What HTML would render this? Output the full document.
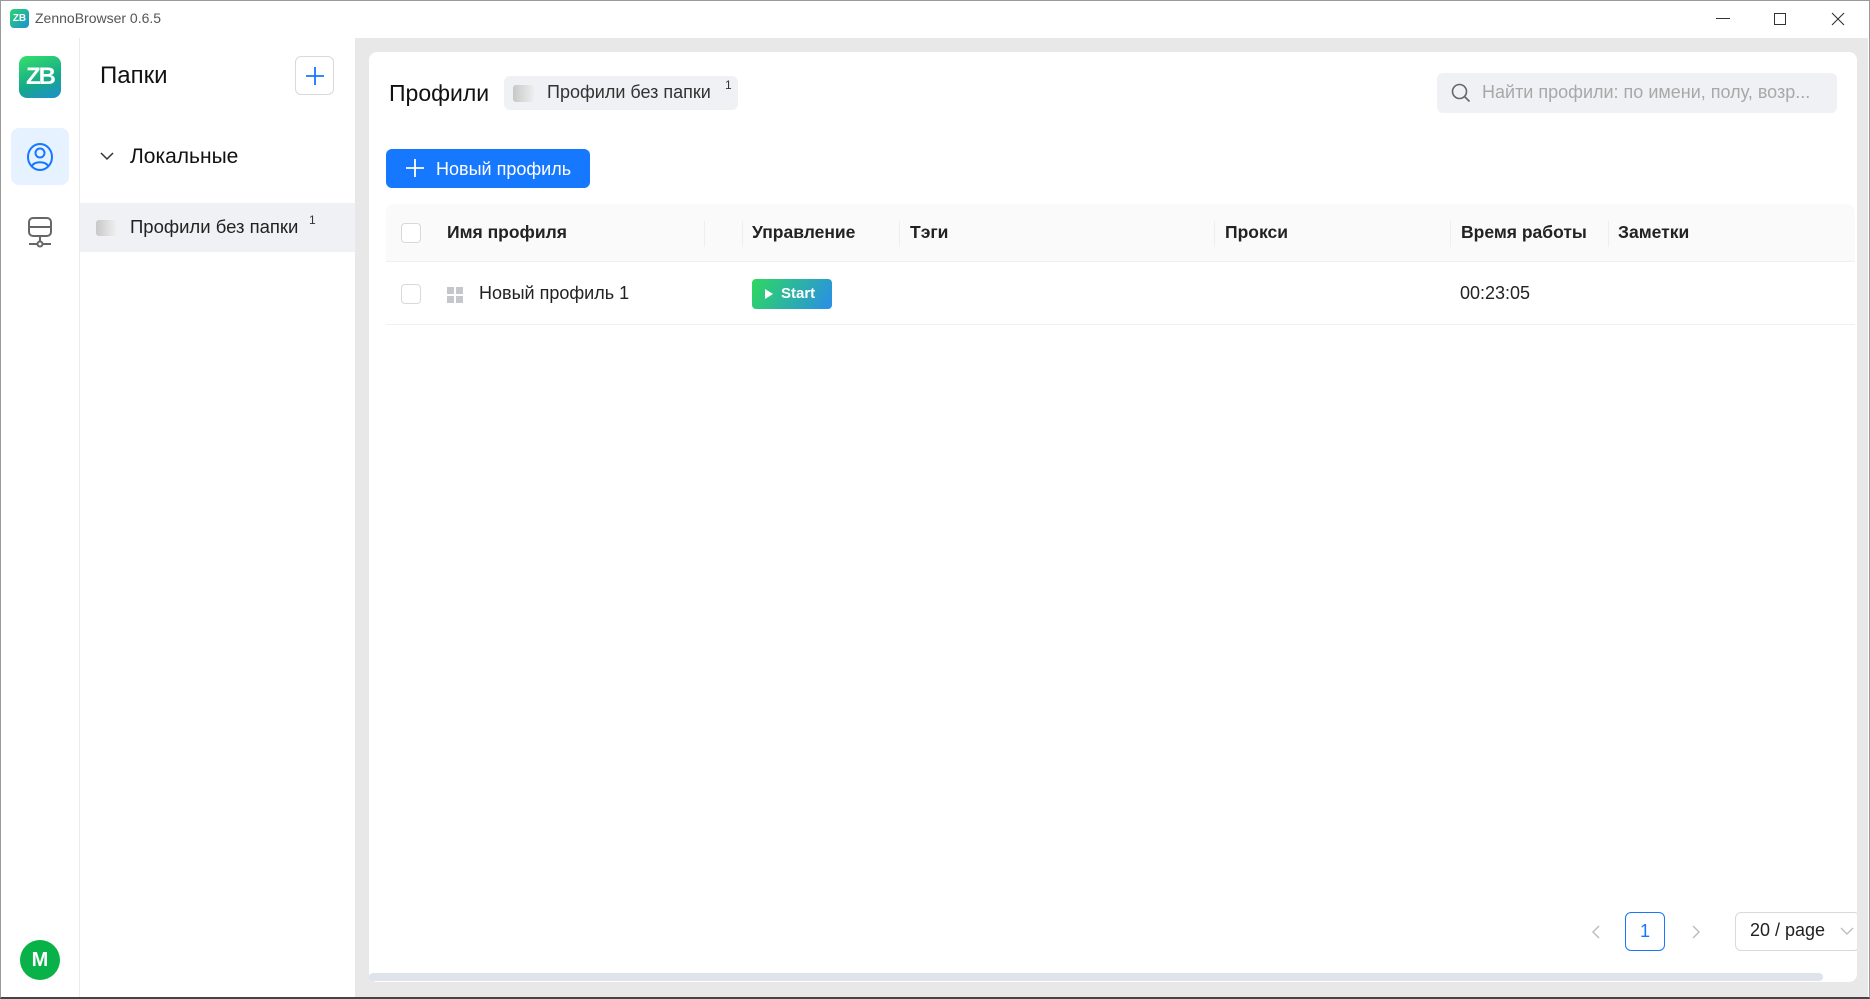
<!DOCTYPE html>
<html><head><meta charset="utf-8"><style>
*{box-sizing:border-box;margin:0;padding:0}
body{width:1870px;height:999px;overflow:hidden;background:#fff;font-family:"Liberation Sans","Noto Sans CJK SC",sans-serif;color:#1f1f1f;position:relative}
.a{position:absolute}
.win{left:0;top:0;width:1870px;height:999px;border:1px solid #9a9a9a;border-bottom:2px solid #444}
</style></head><body>
<div class="a win"></div>
<div class="a" style="left:10px;top:9px;width:19px;height:19px;border-radius:4px;background:linear-gradient(135deg,#2bd46a,#1a8fd8);color:#fff;font:bold 10px 'Liberation Sans';line-height:19px;text-align:center">ZB</div>
<div class="a" style="left:35px;top:10px;font-size:14px;color:#555">ZennoBrowser 0.6.5</div>
<div class="a" style="left:1716px;top:18px;width:14px;height:1px;background:#333"></div>
<div class="a" style="left:1774px;top:13px;width:12px;height:12px;border:1px solid #333"></div>
<svg class="a" style="left:1831px;top:12px" width="14" height="14"><path d="M1 1L13 13M13 1L1 13" stroke="#333" stroke-width="1.1"/></svg>
<div class="a" style="left:1px;top:38px;width:79px;height:959px;border-right:1px solid #ececec;background:#fff"></div>
<div class="a" style="left:19px;top:56px;width:42px;height:42px;border-radius:8px;background:linear-gradient(160deg,#35e06a,#15a88a 60%,#1f8fd0);color:#fff;font:bold 24px 'Liberation Sans';line-height:42px;text-align:center;letter-spacing:-2px">ZB</div>
<div class="a" style="left:11px;top:128px;width:58px;height:57px;border-radius:8px;background:#e6f2ff"></div>
<svg class="a" style="left:26px;top:142px" width="28" height="30" viewBox="0 0 28 30"><ellipse cx="14" cy="15" rx="12" ry="13" fill="none" stroke="#1677ff" stroke-width="2"/><circle cx="14" cy="11" r="4.5" fill="none" stroke="#1677ff" stroke-width="2"/><path d="M6 24c2-5 14-5 16 0" fill="none" stroke="#1677ff" stroke-width="2"/></svg>
<svg class="a" style="left:26px;top:216px" width="28" height="32" viewBox="0 0 28 32"><rect x="3" y="2" width="22" height="18" rx="4" fill="none" stroke="#666" stroke-width="2"/><path d="M3 11h22M14 20v8M3 28h22" stroke="#666" stroke-width="2"/><circle cx="14" cy="28" r="2.5" fill="#fff" stroke="#666" stroke-width="2"/></svg>
<div class="a" style="left:20px;top:940px;width:40px;height:40px;border-radius:50%;background:#09b248;color:#fff;font:bold 20px 'Liberation Sans';line-height:40px;text-align:center">M</div>
<div class="a" style="left:100px;top:62px;font-size:24px;color:#111">Папки</div>
<div class="a" style="left:295px;top:56px;width:39px;height:39px;border:1px solid #d9d9d9;border-radius:6px"></div>
<svg class="a" style="left:305px;top:66px" width="20" height="20"><path d="M10 1v18M1 10h18" stroke="#1677ff" stroke-width="1.8"/></svg>
<svg class="a" style="left:100px;top:151px" width="14" height="10"><path d="M1 2l6 6 6-6" fill="none" stroke="#333" stroke-width="1.5"/></svg>
<div class="a" style="left:130px;top:145px;font-size:21px;color:#111">Локальные</div>
<div class="a" style="left:80px;top:203px;width:275px;height:49px;background:#f0f1f4"></div>
<div class="a" style="left:96px;top:220px;width:20px;height:16px;border-radius:3px;background:linear-gradient(90deg,#c8c8c8,#eee)"></div>
<div class="a" style="left:130px;top:216px;font-size:18.5px;color:#222">Профили без папки</div>
<div class="a" style="left:309px;top:213px;font-size:12px;color:#333">1</div>
<div class="a" style="left:355px;top:38px;width:1513px;height:959px;background:#e8e8e8"></div>
<div class="a" style="left:369px;top:52px;width:1488px;height:930px;background:#fff;border-radius:8px"></div>
<div class="a" style="left:369px;top:973px;width:1454px;height:8px;background:#dfe3eb;border-radius:4px"></div>
<div class="a" style="left:389px;top:80px;font-size:23px;color:#111">Профили</div>
<div class="a" style="left:504px;top:76px;width:234px;height:34px;border-radius:6px;background:#f0f1f4"></div>
<div class="a" style="left:513px;top:85px;width:21px;height:17px;border-radius:3px;background:linear-gradient(90deg,#c8c8c8,#eee)"></div>
<div class="a" style="left:547px;top:82px;font-size:18px;color:#333">Профили без папки</div>
<div class="a" style="left:725px;top:78px;font-size:12px;color:#333">1</div>
<div class="a" style="left:1437px;top:73px;width:400px;height:40px;border-radius:6px;background:#f0f1f4"></div>
<svg class="a" style="left:1451px;top:83px" width="20" height="20"><circle cx="8.5" cy="8.5" r="7" fill="none" stroke="#666" stroke-width="1.6"/><path d="M13.5 13.5l5 5" stroke="#666" stroke-width="1.6"/></svg>
<div class="a" style="left:1482px;top:82px;font-size:18px;color:#a8a8a8">Найти профили: по имени, полу, возр...</div>
<div class="a" style="left:386px;top:149px;width:204px;height:39px;border-radius:6px;background:#1677ff"></div>
<svg class="a" style="left:405px;top:158px" width="20" height="20"><path d="M10 1v18M1 10h18" stroke="#fff" stroke-width="1.8"/></svg>
<div class="a" style="left:436px;top:159px;font-size:18px;color:#fff">Новый профиль</div>
<div class="a" style="left:386px;top:204px;width:1469px;height:58px;background:#fafafa;border-bottom:1px solid #f0f0f0;border-radius:8px 8px 0 0"></div>
<div class="a" style="left:401px;top:223px;width:20px;height:20px;border:1px solid #d9d9d9;border-radius:4px;background:#fff"></div>
<div class="a" style="left:447px;top:222px;font-size:17.5px;font-weight:bold;color:#222">Имя профиля</div>
<div class="a" style="left:704px;top:221px;width:1px;height:26px;background:#eee"></div>
<div class="a" style="left:742px;top:221px;width:1px;height:26px;background:#eee"></div>
<div class="a" style="left:752px;top:222px;font-size:17.5px;font-weight:bold;color:#222">Управление</div>
<div class="a" style="left:899px;top:221px;width:1px;height:26px;background:#eee"></div>
<div class="a" style="left:910px;top:222px;font-size:17.5px;font-weight:bold;color:#222">Тэги</div>
<div class="a" style="left:1214px;top:221px;width:1px;height:26px;background:#eee"></div>
<div class="a" style="left:1225px;top:222px;font-size:17.5px;font-weight:bold;color:#222">Прокси</div>
<div class="a" style="left:1450px;top:221px;width:1px;height:26px;background:#eee"></div>
<div class="a" style="left:1461px;top:222px;font-size:17.5px;font-weight:bold;color:#222">Время работы</div>
<div class="a" style="left:1608px;top:221px;width:1px;height:26px;background:#eee"></div>
<div class="a" style="left:1618px;top:222px;font-size:17.5px;font-weight:bold;color:#222">Заметки</div>
<div class="a" style="left:386px;top:324px;width:1469px;height:1px;background:#f0f0f0"></div>
<div class="a" style="left:401px;top:284px;width:20px;height:20px;border:1px solid #d9d9d9;border-radius:4px"></div>
<svg class="a" style="left:447px;top:287px" width="16" height="16"><rect x="0" y="0" width="7" height="7" fill="#c4c7cc"/><rect x="9" y="0" width="7" height="7" fill="#c4c7cc"/><rect x="0" y="9" width="7" height="7" fill="#c4c7cc"/><rect x="9" y="9" width="7" height="7" fill="#c4c7cc"/></svg>
<div class="a" style="left:479px;top:283px;font-size:18px;color:#222">Новый профиль 1</div>
<div class="a" style="left:752px;top:279px;width:80px;height:30px;border-radius:4px;background:linear-gradient(120deg,#2ed85e,#2a8ee8)"></div>
<svg class="a" style="left:764px;top:288px" width="10" height="12"><path d="M1 1l8 5-8 5z" fill="#fff"/></svg>
<div class="a" style="left:781px;top:285px;font-size:15px;font-weight:bold;color:#fff">Start</div>
<div class="a" style="left:1460px;top:283px;font-size:18px;color:#222">00:23:05</div>
<svg class="a" style="left:1590px;top:924px" width="12" height="16"><path d="M9 2L3 8l6 6" fill="none" stroke="#bbb" stroke-width="1.4"/></svg>
<div class="a" style="left:1625px;top:912px;width:40px;height:39px;border:1px solid #1677ff;border-radius:6px;color:#1677ff;font-size:18px;text-align:center;line-height:37px">1</div>
<svg class="a" style="left:1690px;top:924px" width="12" height="16"><path d="M3 2l6 6-6 6" fill="none" stroke="#bbb" stroke-width="1.4"/></svg>
<div class="a" style="left:1735px;top:912px;width:125px;height:39px;border:1px solid #d9d9d9;border-radius:6px"></div>
<div class="a" style="left:1750px;top:920px;font-size:18px;color:#222">20 / page</div>
<svg class="a" style="left:1840px;top:926px" width="14" height="10"><path d="M1 2l6 6 6-6" fill="none" stroke="#bbb" stroke-width="1.3"/></svg>
<div class="a" style="left:1857px;top:38px;width:11px;height:959px;background:#e8e8e8"></div>
</body></html>
